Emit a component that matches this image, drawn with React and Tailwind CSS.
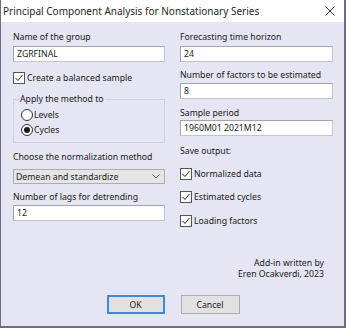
import React from 'react';

const Label = ({ children, className = '' }) => (
  <div className={`h-[12px] leading-[12px] whitespace-nowrap ${className}`}>{children}</div>
);

const TextBox = ({ value, className = '' }) => (
  <div
    className={`h-[16px] bg-white border border-[#c4c4ce] border-t-[#a3a3ad] border-l-[#a3a3ad] pl-[3px] flex items-center leading-[12px] ${className}`}
  >
    {value}
  </div>
);

const CheckBox = ({ label, className = '' }) => (
  <div className={`h-[12px] flex items-center gap-[2px] leading-[12px] ${className}`}>
    <span className="w-[12px] h-[12px] shrink-0 bg-white border border-[#555] flex items-center justify-center">
      <svg width="10" height="10" viewBox="0 0 10 10">
        <path d="M1.5 5 L4 7.5 L8.5 2" fill="none" stroke="#222" strokeWidth="1" />
      </svg>
    </span>
    <span className="whitespace-nowrap">{label}</span>
  </div>
);

const Radio = ({ label, checked }) => (
  <div className="h-[12px] flex items-center gap-[1px] leading-[12px]">
    <span className="w-[12px] h-[12px] shrink-0 rounded-full bg-white border border-[#333] flex items-center justify-center">
      {checked && <span className="w-[6px] h-[6px] rounded-full bg-[#1a1a1a]" />}
    </span>
    <span>{label}</span>
  </div>
);

export default function App() {
  return (
    <div className="w-[346px] h-[328px] flex flex-col bg-[#e5e5f3] border-l border-r-2 border-b-2 border-[#6c6c84] text-[#1a1a1a] font-['Noto_Sans',sans-serif] text-[8.7px]">
      <div className="h-[22px] shrink-0 bg-white flex items-center justify-between pl-[2px] pr-[9px]">
        <span className="text-[10px] leading-[14px] text-[#1f1f1f] whitespace-nowrap">
          Principal Component Analysis for Nonstationary Series
        </span>
        <svg width="10" height="10" viewBox="0 0 10 10">
          <path d="M0.5 0.5 L9.5 9.5 M9.5 0.5 L0.5 9.5" stroke="#333" strokeWidth="1" />
        </svg>
      </div>

      <div className="flex-1 flex flex-col pl-[12px] pr-[11px] pt-[9px]">
        <div className="grid grid-cols-[152px_153px] gap-x-[15px]">
          <div className="flex flex-col">
            <Label>Name of the group</Label>
            <TextBox value="ZGRFINAL" className="mt-[3px]" />
            <CheckBox label="Create a balanced sample" className="mt-[10px]" />
            <fieldset className="mt-[9px] border border-[#d0d0dc] pl-[7px] pb-[6px]">
              <legend className="h-[12px] leading-[12px] -ml-[1px] pr-[1px]">Apply the method to</legend>
              <div className="flex flex-col gap-[3px] pt-[4px]">
                <Radio label="Levels" />
                <Radio label="Cycles" checked />
              </div>
            </fieldset>
            <Label className="mt-[8px]">Choose the normalization method</Label>
            <div className="mt-[6px] h-[15px] bg-[#e5e5e5] border border-[#adadad] flex items-center justify-between pl-[2px] pr-[4px] leading-[12px]">
              <span>Demean and standardize</span>
              <svg width="8" height="5" viewBox="0 0 8 5">
                <path d="M0.5 0.5 L4 4 L7.5 0.5" fill="none" stroke="#555" strokeWidth="1" />
              </svg>
            </div>
            <Label className="mt-[7px]">Number of lags for detrending</Label>
            <TextBox value="12" className="mt-[2px]" />
          </div>

          <div className="flex flex-col">
            <Label>Forecasting time horizon</Label>
            <TextBox value="24" className="mt-[3px]" />
            <Label className="mt-[7px]">Number of factors to be estimated</Label>
            <TextBox value="8" className="mt-[2px]" />
            <Label className="mt-[8px]">Sample period</Label>
            <TextBox value="1960M01 2021M12" className="mt-[1px]" />
            <Label className="mt-[9px]">Save output:</Label>
            <CheckBox label="Normalized data" className="mt-[11px]" />
            <CheckBox label="Estimated cycles" className="mt-[11px]" />
            <CheckBox label="Loading factors" className="mt-[12px]" />
          </div>
        </div>

        <div className="mt-[31px] pr-[9px] flex flex-col items-end leading-[11px]">
          <span>Add-in written by</span>
          <span>Eren Ocakverdi, 2023</span>
        </div>

        <div className="mt-[15px] flex justify-center gap-[16px]">
          <button className="w-[58px] h-[19px] bg-[#e1e1e1] border-2 border-[#3d8bd8] flex items-center justify-center leading-[12px]">
            OK
          </button>
          <button className="w-[59px] h-[19px] bg-[#e1e1e1] border border-[#adadad] flex items-center justify-center leading-[12px]">
            Cancel
          </button>
        </div>
      </div>
    </div>
  );
}
